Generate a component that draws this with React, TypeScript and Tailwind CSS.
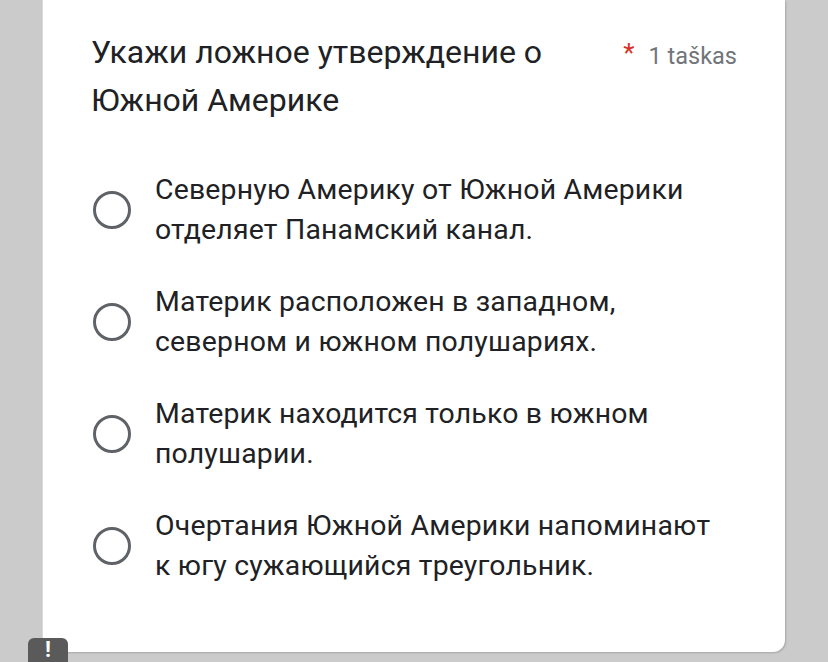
import React from "react";

const options = [
  ["Северную Америку от Южной Америки", "отделяет Панамский канал."],
  ["Материк расположен в западном,", "северном и южном полушариях."],
  ["Материк находится только в южном", "полушарии."],
  ["Очертания Южной Америки напоминают", "к югу сужающийся треугольник."],
];

export default function App() {
  return (
    <div className="relative w-[828px] h-[662px] overflow-hidden bg-[#cbcbcb]" style={{ fontFamily: "Roboto, 'Noto Sans', sans-serif" }}>
      <div className="ml-[42px] w-[743px] h-[652px] bg-white rounded-b-[12px] border-l border-[#dadada] shadow-[1px_1px_2px_rgba(0,0,0,0.18)] pl-[48px] pr-[48px] pt-[28px]">
        <div className="flex items-start">
          <div className="w-[530px] text-[32px] leading-[48px] text-[#202124]">
            Укажи ложное утверждение о Южной Америке
          </div>
          <div className="flex items-start ml-auto pt-[10px]">
            <span className="text-[#d93025] text-[26px] leading-[30px] mr-[14px]">*</span>
            <span className="text-[#70757a] text-[23.5px] leading-[40px] -mt-[2px]">1 taškas</span>
          </div>
        </div>
        <div className="mt-[46px] flex flex-col gap-[32px]">
          {options.map((o, i) => (
            <div key={i} className="flex items-center">
              <div className="w-[38px] h-[38px] rounded-full border-[3.5px] border-[#5f6368] shrink-0 ml-[2px]" />
              <div className="ml-[24px] text-[28.4px] leading-[40px] text-[#202124] tracking-[0.2px]">
                <div>{o[0]}</div>
                <div>{o[1]}</div>
              </div>
            </div>
          ))}
        </div>
      </div>
      <div className="absolute left-[28px] top-[638px] w-[40px] h-[30px] bg-[#5a5a5a] rounded-t-[6px] flex justify-center">
        <span className="text-white text-[22px] font-bold leading-[30px] mt-[-3px]">!</span>
      </div>
    </div>
  );
}
